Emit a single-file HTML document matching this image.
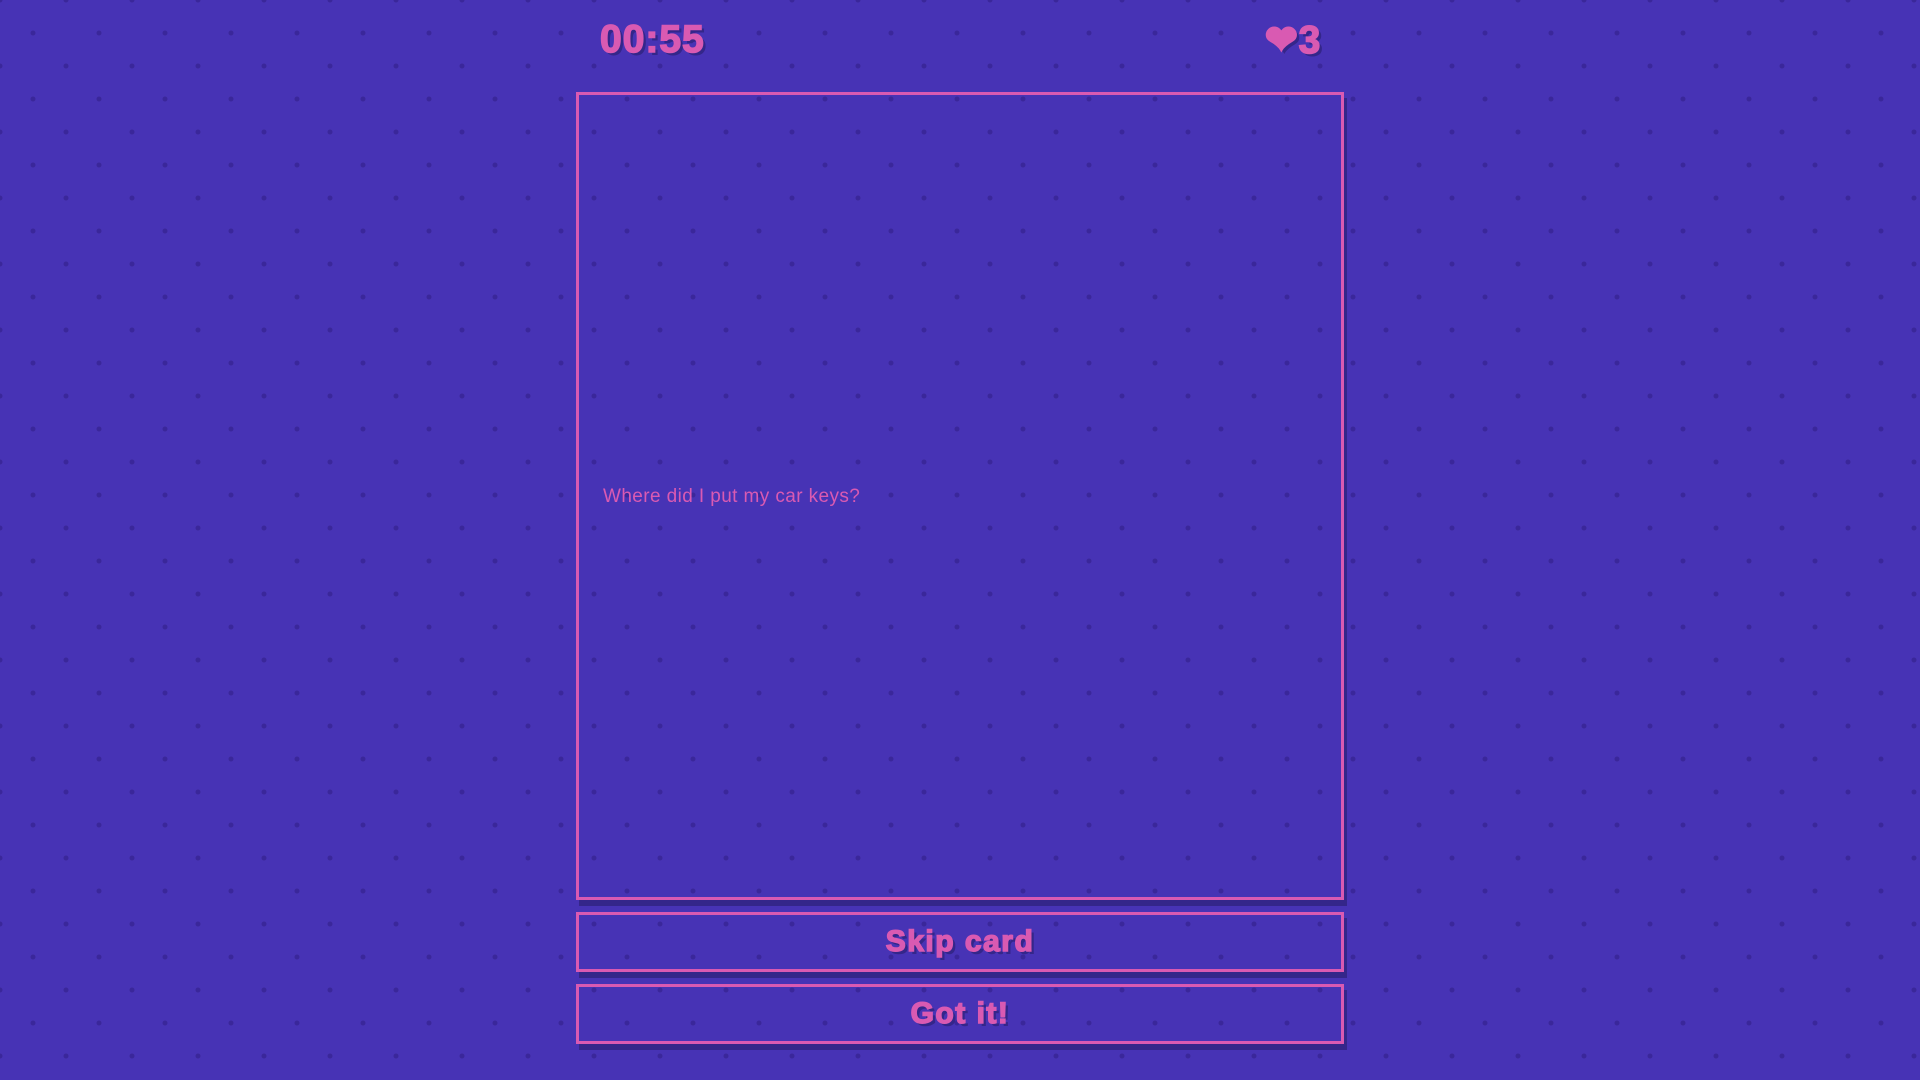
<!DOCTYPE html>
<html><head><meta charset="utf-8"><style>
html,body{margin:0;padding:0}
body{width:1920px;height:1080px;overflow:hidden;background-color:#4733b5;
background-image:radial-gradient(circle at center,#3a279a 2.2px,transparent 2.8px),radial-gradient(circle at center,#3a279a 2.2px,transparent 2.8px);
background-size:66px 66px,66px 66px;background-position:0 0,33px 33px;
font-family:"Liberation Sans",sans-serif;color:#d95ab2;position:relative}
.hud{position:absolute;top:18px;font-size:39px;font-weight:900;letter-spacing:1px;text-shadow:3px 3px 0 #34268a;-webkit-text-stroke:1.5px #d95ab2}
.box{position:absolute;left:576px;width:762px;border:3px solid #d95ab2;box-shadow:3px 6px 0 #34268a}
.card{top:92px;height:802px}
.q{position:absolute;left:24px;top:391px;font-size:19px;letter-spacing:0.4px;color:#d95ab2}
.btn{height:54px;text-align:center;line-height:54px;font-size:30px;letter-spacing:1.5px;font-weight:900;text-shadow:3px 3px 0 #34268a;-webkit-text-stroke:1.5px #d95ab2}
</style></head><body>
<div class="hud" style="left:600px">00:55</div>
<div class="hud" style="left:1265px">❤3</div>
<div class="box card"><div class="q">Where did I put my car keys?</div></div>
<div class="box btn" style="top:912px">Skip card</div>
<div class="box btn" style="top:984px">Got it!</div>
</body></html>
